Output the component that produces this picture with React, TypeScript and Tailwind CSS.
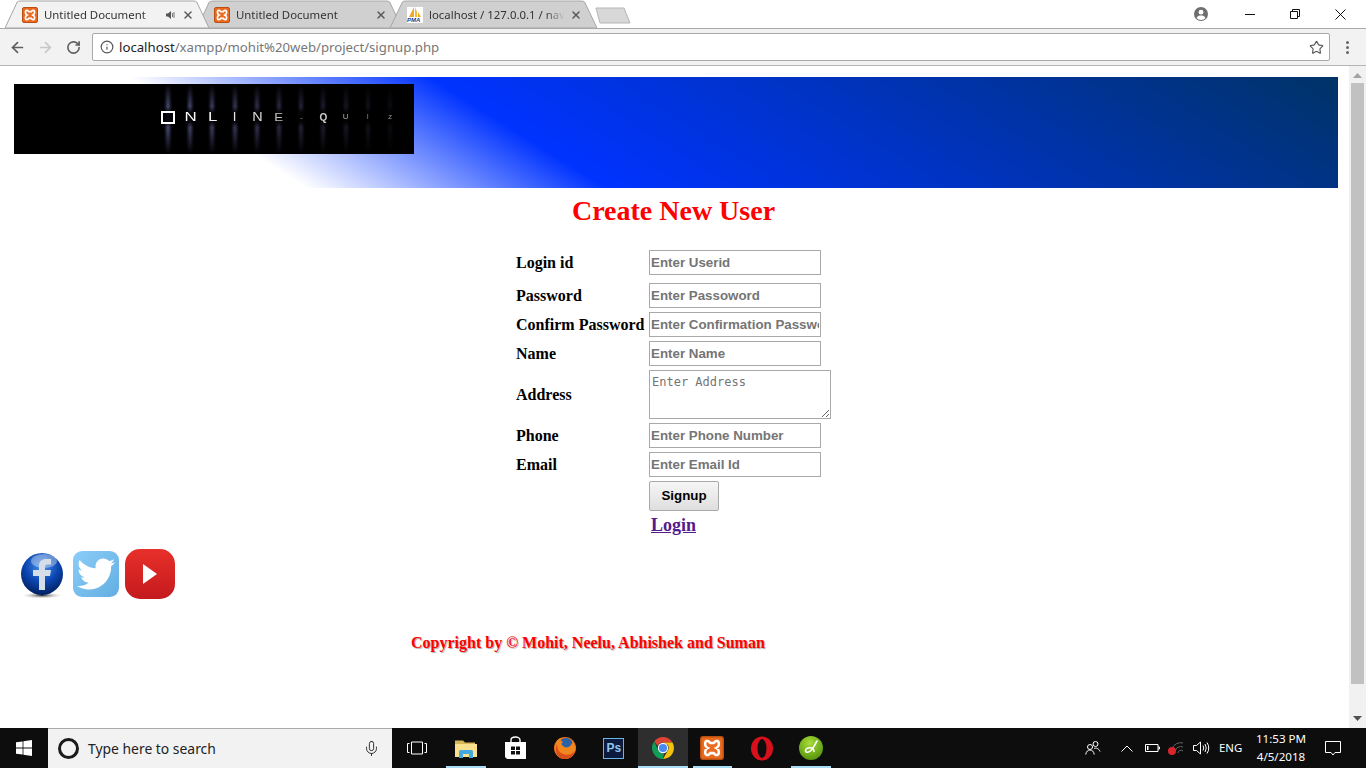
import React from 'react';
import { ArrowLeft, ArrowRight, RotateCw, Info, Star, Mic, X } from 'lucide-react';
import { FaTwitter } from 'react-icons/fa';

const XamppIcon = ({ size = 16 }: { size?: number }) => (
  <svg width={size} height={size} viewBox="0 0 16 16">
    <rect x="0.5" y="0.5" width="15" height="15" rx="1.5" fill="#ea6a1f" stroke="#b9500f" />
    <path
      d="M3.500 4.600C3.500 3.200 5.200 2.900 6 3.800L6.800 4.600H9.200L10 3.800C10.800 2.900 12.500 3.200 12.500 4.600V6C12.500 6.900 11.700 7.500 10.800 8C11.700 8.500 12.500 9.100 12.500 10V11.400C12.500 12.800 10.800 13.100 10 12.200L9.200 11.400H6.800L6 12.200C5.200 13.100 3.500 12.800 3.500 11.400V10C3.500 9.100 4.300 8.500 5.200 8C4.300 7.500 3.500 6.900 3.500 6Z"
      fill="none"
      stroke="#fff"
      strokeWidth="1.7"
    />
  </svg>
);

const PmaIcon = () => (
  <span className="relative block w-4 h-4 bg-white">
    <svg width="16" height="11" viewBox="0 0 16 11" className="absolute top-0 left-0">
      <path d="M2 10L7 0V10Z" fill="#f5a623" />
      <path d="M8 10V0L10 5V10Z" fill="#f7b733" />
      <path d="M11 10V5L14 10Z" fill="#f5a623" />
    </svg>
    <span className="absolute left-0 top-[10px] text-[6px] leading-[6px] font-bold italic text-[#1b3f8f] font-['Liberation_Sans',sans-serif]">
      PMA
    </span>
  </span>
);

interface TabProps {
  title: string;
  active?: boolean;
  icon: React.ReactNode;
  sound?: boolean;
  width: string;
}

const Tab = ({ title, active, icon, sound, width }: TabProps) => (
  <div className={`relative h-[28px] shrink-0 ${width} ${active ? 'z-10' : ''}`}>
    <svg className="absolute inset-0 w-full h-full" viewBox="0 0 100 28" preserveAspectRatio="none">
      <path
        d="M0 28L6 2Q6.4 1 8 1H92Q93.6 1 94 2L100 28Z"
        fill={active ? '#f2f2f2' : '#d0d0d0'}
        stroke="#a5a5a5"
        vectorEffect="non-scaling-stroke"
      />
    </svg>
    <div className="relative h-full flex items-center pl-[17px] pr-[15px] pt-[2px]">
      <span className="shrink-0 mr-[6px]">{icon}</span>
      <span className="flex-1 overflow-hidden whitespace-nowrap text-[11.4px] text-[#333] font-['Noto_Sans',sans-serif] [mask-image:linear-gradient(to_left,transparent_4px,black_24px)]">
        {title}
      </span>
      {sound && (
        <svg width="10" height="10" viewBox="0 0 10 10" className="mr-[5px] shrink-0">
          <path d="M0 3.5H2L5 1V9L2 6.5H0Z" fill="#555" />
          <path d="M6.5 3V7M8 2V8" stroke="#777" fill="none" />
        </svg>
      )}
      <X size={12} strokeWidth={3} className="text-[#5a5a5a] shrink-0 ml-[1px]" />
    </div>
  </div>
);

const BrowserChrome = () => (
  <div className="shrink-0">
    <div className="h-[28px] bg-white flex items-center pl-[5px]">
      <Tab active width="w-[204px]" title="Untitled Document" sound icon={<XamppIcon />} />
      <div className="ml-[-12px]">
        <Tab width="w-[205px]" title="Untitled Document" icon={<XamppIcon />} />
      </div>
      <div className="ml-[-12px]">
        <Tab width="w-[207px]" title="localhost / 127.0.0.1 / nav" icon={<PmaIcon />} />
      </div>
      <svg width="36" height="17" viewBox="0 0 36 17" className="ml-[-2px] mt-[2px] shrink-0">
        <path d="M1 1H29L35 16H5Z" fill="#d8d8d8" stroke="#b5b5b5" />
      </svg>
      <div className="flex-1 h-full" />
      <div className="h-full flex items-center">
        <svg width="14" height="14" viewBox="0 0 14 14" className="mr-[37px]">
          <circle cx="7" cy="7" r="7" fill="#6e6e6e" />
          <circle cx="7" cy="5.2" r="2.4" fill="#fff" />
          <path d="M2.6 11C3.4 9 5.2 8.6 7 8.6S10.6 9 11.4 11C10.4 12.2 8.8 13 7 13S3.6 12.2 2.6 11Z" fill="#fff" />
        </svg>
        <svg width="10" height="10" viewBox="0 0 10 10" className="mr-[35px]">
          <path d="M0 5.5H10" stroke="#111" />
        </svg>
        <svg width="10" height="10" viewBox="0 0 10 10" className="mr-[35px]">
          <path d="M.5 2.5H7.5V9.5H.5ZM2.5 2.5V.5H9.5V7.5H7.5" fill="none" stroke="#111" />
        </svg>
        <svg width="11" height="11" viewBox="0 0 11 11" className="mr-[20px]">
          <path d="M.5.5L10.5 10.5M10.5.5L.5 10.5" stroke="#111" />
        </svg>
      </div>
    </div>
    <div className="h-[38px] bg-[#f2f2f2] border-t border-b border-t-[#a9a9a9] border-b-[#b5b5b5] flex items-center">
      <ArrowLeft size={17} strokeWidth={2.4} className="ml-[9px] text-[#5f5f5f]" />
      <ArrowRight size={17} strokeWidth={2.4} className="ml-[11px] text-[#c8c8c8]" />
      <RotateCw size={15} strokeWidth={2.6} className="ml-[12px] text-[#5f5f5f]" />
      <div className="ml-[11px] w-[1238px] h-[28px] bg-white border border-[#a9a9a9] rounded-[2px] flex items-center">
        <Info size={14} strokeWidth={2} className="ml-[7px] text-[#555]" />
        <span className="ml-[5px] mt-[1px] text-[13.2px] text-[#777] whitespace-nowrap font-['Noto_Sans',sans-serif]">
          <span className="text-[#222]">localhost</span>/xampp/mohit%20web/project/signup.php
        </span>
        <div className="flex-1" />
        <Star size={15} strokeWidth={1.8} className="mr-[5px] text-[#555]" />
      </div>
      <div className="ml-[16px] flex flex-col gap-[2px]">
        <span className="block w-[3px] h-[3px] rounded-full bg-[#666]" />
        <span className="block w-[3px] h-[3px] rounded-full bg-[#666]" />
        <span className="block w-[3px] h-[3px] rounded-full bg-[#666]" />
      </div>
    </div>
  </div>
);

const logoLetters = [
  { ch: 'O', cls: 'w-[14px] h-[13px] border-2 border-white text-transparent text-[8px] leading-[9px] text-center', opacity: 1 },
  { ch: 'N', cls: 'text-white text-[13px] scale-x-[1.3]', opacity: 1 },
  { ch: 'L', cls: 'text-white text-[13px] scale-x-[1.3]', opacity: 0.95 },
  { ch: 'I', cls: 'text-white text-[13px]', opacity: 0.9 },
  { ch: 'N', cls: 'text-white text-[12px] scale-x-[1.2]', opacity: 0.85 },
  { ch: 'E', cls: 'text-white text-[11px] scale-x-[1.2]', opacity: 0.75 },
  { ch: '-', cls: 'text-white text-[11px]', opacity: 0.3 },
  { ch: 'Q', cls: 'text-white text-[10px] font-bold', opacity: 0.8 },
  { ch: 'U', cls: 'text-white text-[8px]', opacity: 0.65 },
  { ch: 'I', cls: 'text-white text-[7px]', opacity: 0.5 },
  { ch: 'Z', cls: 'text-white text-[6px]', opacity: 0.6 },
];

const Logo = () => (
  <div className="w-[400px] h-[70px] bg-black flex pl-[143px]">
    {logoLetters.map((l, i) => (
      <div key={i} className="relative w-[22.2px] h-full flex items-center justify-center">
        <span
          className="absolute top-0 bottom-0 w-[8px] bg-[linear-gradient(to_bottom,transparent_0%,#4c4c78_32%,#0c0c12_41%,#0c0c12_54%,#4c4c78_62%,transparent_100%)] [mask-image:linear-gradient(to_right,transparent,black,transparent)]"
          style={{ opacity: 1 - i * 0.085 }}
        />
        <span
          className={`relative mt-[-4px] font-['Liberation_Sans',sans-serif] ${l.cls}`}
          style={{ opacity: l.opacity }}
        >
          {l.ch}
        </span>
      </div>
    ))}
  </div>
);

const inputCls =
  "w-[172px] h-[25px] px-[1px] bg-white border border-[#a9a9a9] outline-none text-[13.33px] font-bold font-['Liberation_Sans',sans-serif] placeholder:text-[#757575]";

const Field = ({ label, placeholder }: { label: string; placeholder: string }) => (
  <div className="flex items-center h-[25px]">
    <label className="w-[133px] whitespace-nowrap">{label}</label>
    <input className={inputCls} placeholder={placeholder} />
  </div>
);

const SignupForm = () => (
  <div className="ml-[502px] mt-[23px] flex flex-col gap-[4px] text-[16px] font-bold text-black font-['Liberation_Serif',serif]">
    <div className="mb-[4px]">
      <Field label="Login id" placeholder="Enter Userid" />
    </div>
    <Field label="Password" placeholder="Enter Passoword" />
    <Field label="Confirm Password" placeholder="Enter Confirmation Password" />
    <Field label="Name" placeholder="Enter Name" />
    <div className="flex items-center h-[49px]">
      <label className="w-[133px]">Address</label>
      <textarea
        className="w-[182px] h-[49px] px-[2px] py-[3px] bg-white border border-[#a9a9a9] outline-none text-[12px] font-normal leading-[16px] font-['DejaVu_Sans_Mono',monospace] placeholder:text-[#757575]"
        placeholder="Enter Address"
      />
    </div>
    <Field label="Phone" placeholder="Enter Phone Number" />
    <Field label="Email" placeholder="Enter Email Id" />
    <div className="pl-[133px]">
      <button className="w-[70px] h-[30px] rounded-[2px] border border-[#a9a9a9] bg-[linear-gradient(to_bottom,#f6f6f6,#dedede)] text-[13.33px] font-bold text-black font-['Liberation_Sans',sans-serif]">
        Signup
      </button>
    </div>
    <div className="pl-[135px] h-[20px] flex items-center">
      <a href="#" className="text-[18px] underline text-[#551a8b]">
        Login
      </a>
    </div>
  </div>
);

const SocialIcons = () => (
  <div className="mt-[13px] ml-[5px] h-[52px] flex items-center">
    <svg width="46" height="48" viewBox="0 0 46 48" className="mt-[1px]">
      <defs>
        <radialGradient id="fbBall" cx="50%" cy="30%" r="70%">
          <stop offset="0%" stopColor="#4f95e8" />
          <stop offset="55%" stopColor="#0b47b4" />
          <stop offset="100%" stopColor="#02205f" />
        </radialGradient>
        <radialGradient id="fbShadow">
          <stop offset="0%" stopColor="#333" />
          <stop offset="100%" stopColor="#ccc" stopOpacity="0" />
        </radialGradient>
      </defs>
      <ellipse cx="23" cy="44.5" rx="20" ry="3" fill="url(#fbShadow)" />
      <circle cx="23" cy="23" r="21" fill="url(#fbBall)" />
      <ellipse cx="25" cy="10" rx="13" ry="7" fill="#fff" opacity="0.35" />
      <path d="M20 39V25H14V19H20V15C20 10 23 8 27 8H32V13.5H28.5C26.8 13.5 26 14.2 26 16V19H32L31 25H26V39Z" fill="#d5dde8" />
    </svg>
    <div className="ml-[8px] w-[46px] h-[46px] rounded-[9px] bg-[linear-gradient(135deg,#8bcdf8,#62aee2)] flex items-center justify-center">
      <FaTwitter size={38} className="text-white" />
    </div>
    <div className="ml-[6px] w-[50px] h-[50px] rounded-[15px] bg-[linear-gradient(to_bottom,#e8302a,#c41a1e)] flex items-center justify-center">
      <svg width="14" height="20" viewBox="0 0 14 20">
        <path d="M0 0L14 10L0 20Z" fill="#fff" />
      </svg>
    </div>
  </div>
);

const Scrollbar = () => (
  <div className="w-[17px] shrink-0 bg-[#f1f1f1] flex flex-col items-center">
    <svg width="9" height="5" viewBox="0 0 9 5" className="mt-[7px]">
      <path d="M4.5 0L9 5H0Z" fill="#a3a3a3" />
    </svg>
    <div className="mt-[5px] w-[13px] h-[601px] bg-[#c1c1c1]" />
    <div className="flex-1" />
    <svg width="9" height="5" viewBox="0 0 9 5" className="mb-[7px]">
      <path d="M0 0H9L4.5 5Z" fill="#505050" />
    </svg>
  </div>
);

const ChromeIcon = () => (
  <svg width="24" height="24" viewBox="0 0 24 24">
    <path d="M12 1A11 11 0 0 1 21.5 6.5H12A5.5 5.5 0 0 0 6.8 10L3.2 5.5A11 11 0 0 1 12 1Z" fill="#db4437" />
    <path d="M21.5 6.5A11 11 0 0 1 12 23L16.7 14.8A5.5 5.5 0 0 0 16.5 8.5L12 6.5Z" fill="#f4c20d" />
    <path d="M12 23A11 11 0 0 1 3.2 5.5L7.5 14.8A5.5 5.5 0 0 0 13 17.4Z" fill="#0f9d58" />
    <circle cx="12" cy="12" r="5.2" fill="#fff" />
    <circle cx="12" cy="12" r="4.1" fill="#4a89f3" />
  </svg>
);

const FirefoxIcon = () => (
  <svg width="24" height="24" viewBox="0 0 24 24">
    <circle cx="12" cy="12" r="11" fill="#e8701d" />
    <circle cx="13" cy="9" r="7" fill="#2a62a8" />
    <path d="M2 12C2 6 5 3 8 2C7 4 8 5 10 6C8 7 8 9 10 10C12 12 16 12 18 9C19 8 20 6 19.5 5C22 8 23 12 22 15C20 21 15 23 12 23C6 23 2 18 2 12Z" fill="#f2861f" />
    <path d="M12 23C17 23 21 20 22 15C19 19 13 20 8 17C5 15 4 11 4 8C2 12 2 23 12 23Z" fill="#d94f1a" />
  </svg>
);

const FolderIcon = () => (
  <svg width="22" height="19" viewBox="0 0 22 19">
    <path d="M0 1.5H8L10 3.5H20V6H0Z" fill="#d9b657" />
    <path d="M0 5H22V18H0Z" fill="#fde08d" />
    <path d="M4 19V13C4 11.5 5 11 6 11H16C17 11 18 11.5 18 13V19H14V15H8V19Z" fill="#44a9dd" />
  </svg>
);

const StoreIcon = () => (
  <svg width="21" height="24" viewBox="0 0 21 24">
    <path d="M6 7V4C6 2 8 1 10.5 1S15 2 15 4V7" fill="none" stroke="#fff" strokeWidth="1.4" />
    <path d="M0 6H21V23H2L0 21Z" fill="#fff" />
    <path d="M6 10.5H10V14H6ZM11 10.5H15V14H11ZM6 15H10V18.5H6ZM11 15H15V18.5H11Z" fill="#111" />
  </svg>
);

const PsIcon = () => (
  <div className="w-[21px] h-[21px] bg-[#0b1a3d] border-[1.5px] border-[#6eb2ec] flex items-center justify-center text-[12px] leading-none font-bold text-[#8fc5f3] font-['Liberation_Sans',sans-serif]">
    Ps
  </div>
);

const OperaIcon = () => (
  <svg width="24" height="25" viewBox="0 0 24 25">
    <ellipse cx="12" cy="12.5" rx="11" ry="12" fill="#d8101c" />
    <ellipse cx="12" cy="12.5" rx="4.500" ry="9.500" fill="#0d0d0d" />
  </svg>
);

const DwIcon = () => (
  <div className="relative w-[24px] h-[24px] rounded-full bg-[radial-gradient(circle_at_45%_30%,#a8dc3a,#5f9d12_70%,#3f7a0a)] flex items-center justify-center">
    <svg width="14" height="16" viewBox="0 0 14 16">
      <path d="M13 1C11 4 9.500 8 7 10.500C5 12.500 2 13 1.500 11C1 9 4 7 8 8C9 8.500 10 10 10 11.500" fill="none" stroke="#fff" strokeWidth="1.6" strokeLinecap="round" />
    </svg>
  </div>
);

const TaskSlot = ({ children, open, active }: { children: React.ReactNode; open?: boolean; active?: boolean }) => (
  <div className={`relative w-[49.3px] h-full flex items-center justify-center ${active ? 'bg-[#2e2e2e]' : ''}`}>
    {children}
    {open && (
      <span className={`absolute bottom-0 h-[2px] bg-[#a9dcf5] ${active ? 'left-0 right-0' : 'left-[5px] right-[5px]'}`} />
    )}
  </div>
);

const Taskbar = () => (
  <div className="h-[40px] shrink-0 bg-[#0d0d0d] flex items-center text-white font-['Noto_Sans',sans-serif]">
    <div className="w-[48px] h-full flex items-center justify-center">
      <svg width="16" height="16" viewBox="0 0 16 16">
        <path d="M0 2.3L6.6 1.4V7.6H0ZM7.4 1.3L16 0V7.6H7.4ZM0 8.4H6.6V14.6L0 13.7ZM7.4 8.4H16V16L7.4 14.7Z" fill="#fff" />
      </svg>
    </div>
    <div className="w-[344px] h-full bg-[#f2f2f2] border-t border-[#a9a9a9] flex items-center text-[#222]">
      <span className="ml-[10px] block w-[21px] h-[21px] rounded-full border-[3px] border-[#1a1a1a]" />
      <span className="ml-[9px] mt-[1px] text-[13.9px] whitespace-nowrap">Type here to search</span>
      <div className="flex-1" />
      <Mic size={17} strokeWidth={1.3} className="mr-[12px] text-[#222]" />
    </div>
    <TaskSlot>
      <svg width="20" height="14" viewBox="0 0 20 14">
        <path d="M4.5 1H15.5V13H4.5ZM2.5 2.5H.5V11.5H2.5M17.5 2.5H19.5V11.5H17.5" fill="none" stroke="#fff" />
      </svg>
    </TaskSlot>
    <TaskSlot open><FolderIcon /></TaskSlot>
    <TaskSlot><StoreIcon /></TaskSlot>
    <TaskSlot><FirefoxIcon /></TaskSlot>
    <TaskSlot><PsIcon /></TaskSlot>
    <TaskSlot open active><ChromeIcon /></TaskSlot>
    <TaskSlot open><XamppIcon size={24} /></TaskSlot>
    <TaskSlot><OperaIcon /></TaskSlot>
    <TaskSlot open><DwIcon /></TaskSlot>
    <div className="flex-1" />
    <svg width="16" height="16" viewBox="0 0 16 16" className="mr-[20px]">
      <circle cx="10.5" cy="4" r="2.5" fill="none" stroke="#fff" />
      <circle cx="5" cy="7" r="2.5" fill="none" stroke="#fff" />
      <path d="M.8 14.5C1 11.5 3 10 5 10S9 11.5 9.2 14.5M9 8.5C11 7.5 14 8.5 15 11.5" fill="none" stroke="#fff" />
    </svg>
    <svg width="12" height="7" viewBox="0 0 12 7" className="mr-[12px]">
      <path d="M.5 6.5L6 1L11.5 6.5" fill="none" stroke="#fff" />
    </svg>
    <svg width="15" height="8" viewBox="0 0 15 8" className="mr-[8px]">
      <path d="M.5.5H13V7.5H.5ZM13 3H14.5V5H13" fill="none" stroke="#fff" />
      <path d="M2 2H3.5V6H2Z" fill="#fff" />
    </svg>
    <div className="relative w-[16px] h-[14px] mr-[9px]">
      <svg width="16" height="14" viewBox="0 0 16 14">
        <path d="M4 8A9 9 0 0 1 15 2M7 10A6 6 0 0 1 15 6M10 12A3 3 0 0 1 15 10" fill="none" stroke="#666" />
      </svg>
      <span className="absolute left-0 bottom-0 w-[8px] h-[8px] rounded-full bg-[#d9262c]" />
    </div>
    <svg width="17" height="14" viewBox="0 0 17 14" className="mr-[9px]">
      <path d="M.5 4.5H3.5L7.5 1V13L3.5 9.500H.5Z" fill="none" stroke="#fff" />
      <path d="M10 4.500Q11.500 7 10 9.500M12 3Q14.500 7 12 11M14 1.500Q17.500 7 14 12.500" fill="none" stroke="#fff" />
    </svg>
    <span className="text-[11.4px] w-[24px] mr-[12px] whitespace-nowrap">ENG</span>
    <div className="flex flex-col items-center w-[52px] text-[11.6px] leading-[18px] whitespace-nowrap">
      <span>11:53 PM</span>
      <span>4/5/2018</span>
    </div>
    <svg width="16" height="15" viewBox="0 0 16 15" className="ml-[18px] mr-[25px]">
      <path d="M.5.5H15.5V11.500H10L8 14L6 11.500H.5Z" fill="none" stroke="#fff" />
    </svg>
  </div>
);

export default function App() {
  return (
    <div className="w-[1366px] h-[768px] overflow-hidden flex flex-col bg-white">
      <BrowserChrome />
      <div className="flex-1 min-h-0 flex">
        <main className="flex-1 pt-[11px] pl-[14px] pr-[11px]">
          <div className="w-[1324px] h-[111px] pt-[7px] bg-[linear-gradient(32deg,#ffffff_19.5%,#0033ff_39.5%,#003366_100%)]">
            <Logo />
          </div>
          <h1 className="mt-[7px] pr-[5px] text-center text-[28px] leading-[32px] font-bold text-[#ff0000] font-['Liberation_Serif',serif]">
            Create New User
          </h1>
          <SignupForm />
          <SocialIcons />
          <p className="mt-[34px] ml-[397px] text-[16px] leading-[18px] font-bold text-[#ff0000] [text-shadow:1px_1px_1px_#aaa] font-['Liberation_Serif',serif]">
            Copyright by © Mohit, Neelu, Abhishek and Suman
          </p>
        </main>
        <Scrollbar />
      </div>
      <Taskbar />
    </div>
  );
}
